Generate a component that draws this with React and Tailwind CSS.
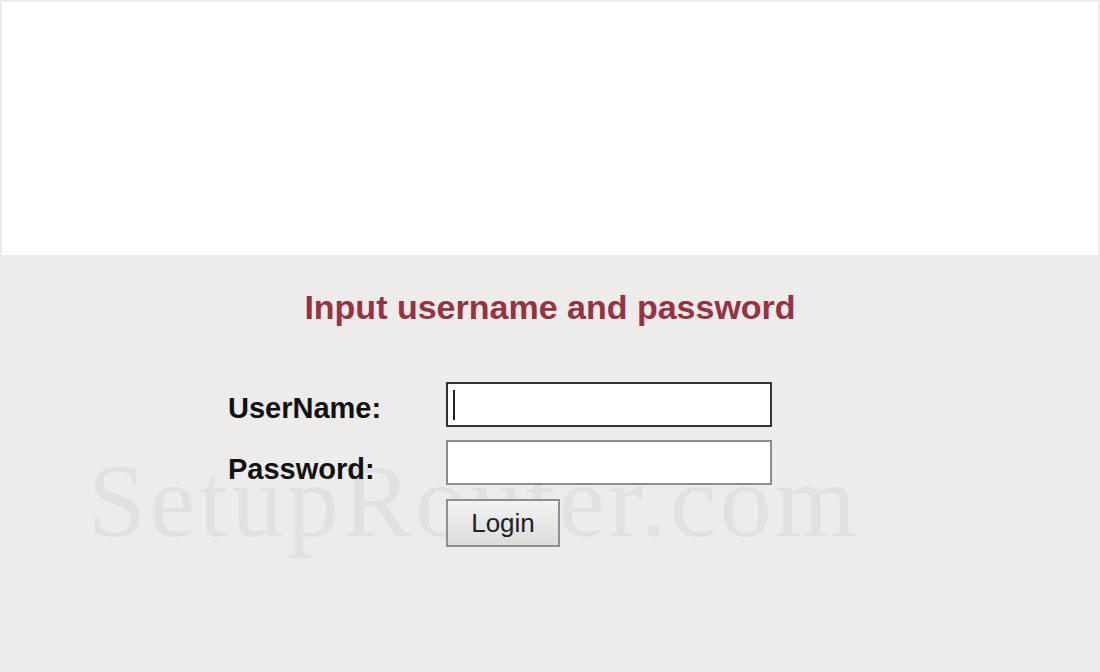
export default function App() {
  return (
    <div
      className="relative w-[1100px] h-[672px] overflow-hidden bg-[#eeebeb]"
      style={{ fontFamily: '"Liberation Sans", Arial, sans-serif' }}
    >
      <div
        className="absolute left-[88px] top-[449px] text-[104px] leading-none tracking-[3.5px] text-[#e3e0e0] whitespace-nowrap select-none"
        style={{ fontFamily: '"Liberation Serif", "Times New Roman", serif' }}
      >
        SetupRouter.com
      </div>

      <div className="relative">
        <div className="mx-[2px] mt-[2px] h-[253px] bg-white" />

        <div className="mt-[32px] text-center text-[34px] leading-[40px] font-bold text-[#963242]">
          Input username and password
        </div>

        <div className="mt-[55px] pl-[228px] flex flex-col">
          <div className="flex">
            <div className="w-[218px] pt-[10px] text-[29px] leading-[32px] font-bold text-[#111]">
              UserName:
            </div>
            <div className="w-[326px] h-[45px] border-2 border-[#333] bg-white flex items-center pl-[5px]">
              <span className="w-[2px] h-[30px] bg-[#222]" />
            </div>
          </div>

          <div className="flex mt-[13px]">
            <div className="w-[218px] pt-[13px] text-[29px] leading-[32px] font-bold text-[#111]">
              Password:
            </div>
            <div className="w-[326px] h-[45px] border-2 border-[#8c8c8c] bg-white" />
          </div>

          <div className="flex mt-[14px]">
            <div className="w-[218px]" />
            <div className="w-[114px] h-[48px] border-2 border-[#8f8f8f] bg-gradient-to-b from-[#f3f3f3] to-[#dcdcdc] flex items-center justify-center text-[26px] text-[#222]">
              Login
            </div>
          </div>
        </div>
      </div>
    </div>
  );
}
